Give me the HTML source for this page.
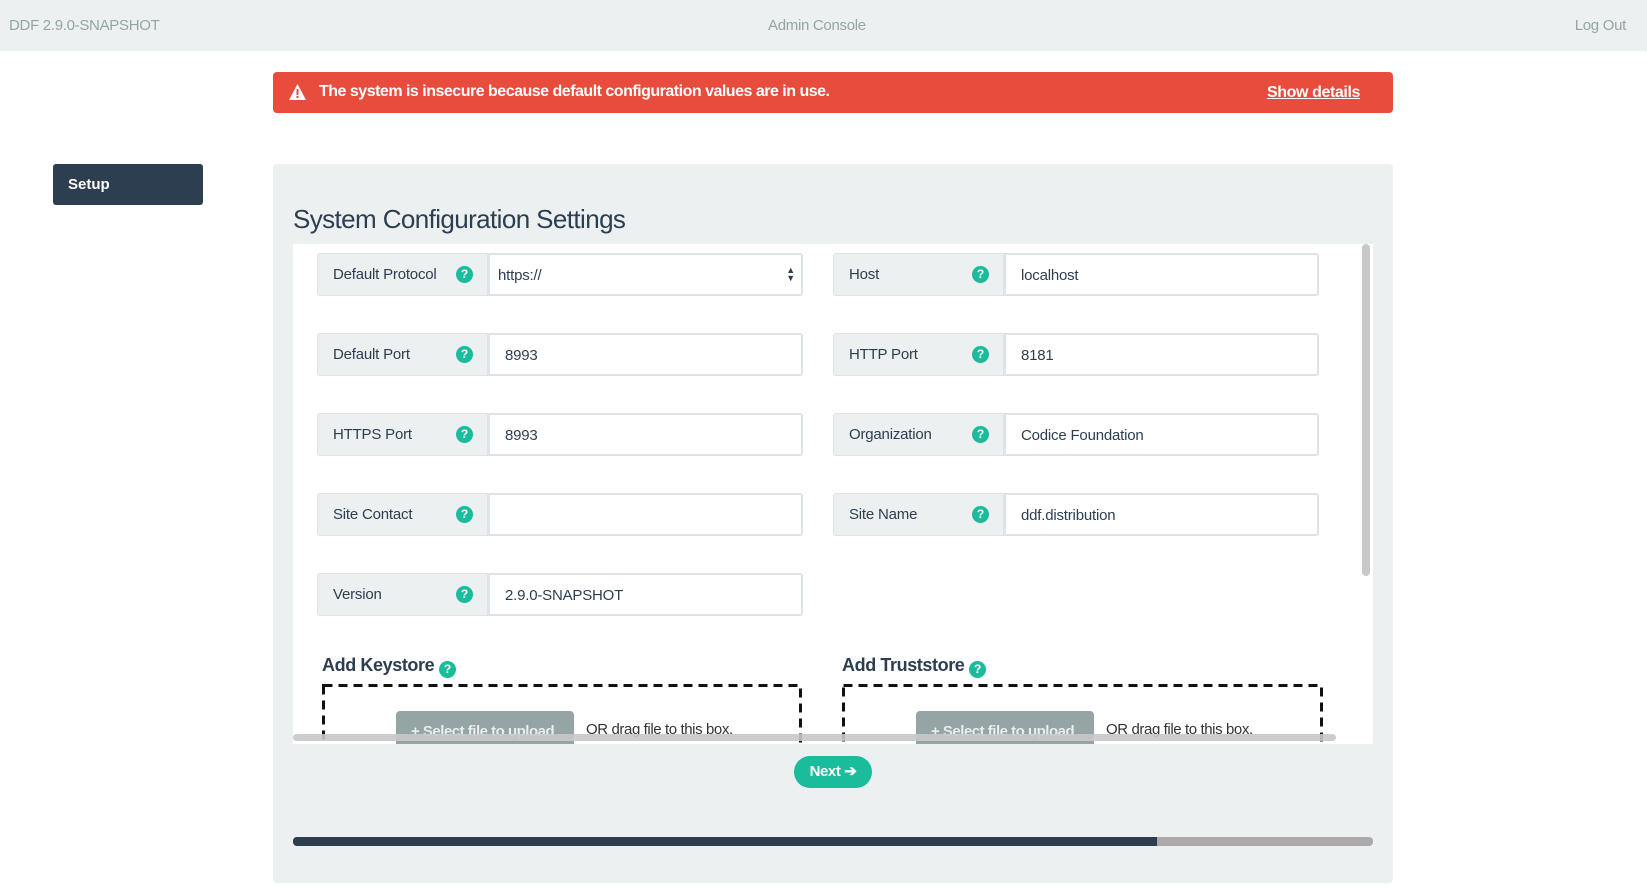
<!DOCTYPE html>
<html><head><meta charset="utf-8"><style>
*{box-sizing:border-box;margin:0;padding:0}
body{width:1647px;height:893px;background:#fff;font-family:"Liberation Sans",sans-serif;position:relative;overflow:hidden;color:#2c3e50}
.hdr{position:absolute;left:0;top:0;width:1647px;height:51px;background:#ecf0f1;color:#95a5a6;font-size:15px}
.hdr span{position:absolute;top:17px;letter-spacing:-0.3px}
.alert{position:absolute;left:273px;top:72px;width:1120px;height:41px;background:#e74c3c;border-radius:4px;color:#fff;font-size:16px;font-weight:bold}
.setup{position:absolute;left:53px;top:164px;width:150px;height:41px;background:#2c3e50;border-radius:3px;color:#fff;font-weight:bold;font-size:15px;padding:12px 0 0 15px}
.panel{position:absolute;left:273px;top:164px;width:1120px;height:719px;background:#ecf0f1;border-radius:4px}
.title{position:absolute;left:293px;top:204px;font-size:26px;color:#2c3e50;letter-spacing:-0.6px}
.inner{position:absolute;left:293px;top:244px;width:1080px;height:500px;background:#fff;overflow:hidden}
.row{position:absolute;height:43px;width:486px}
.lab{position:absolute;left:0;top:0;width:171px;height:43px;background:#ecf0f1;border:1px solid #dde3e8;border-radius:3px 0 0 3px;font-size:15px;padding:12px 0 0 15px;letter-spacing:-0.2px}
.q{position:absolute;left:138px;top:12px;width:17px;height:17px;border-radius:50%;background:#1abc9c;color:#fff;font-size:12px;font-weight:bold;text-align:center;line-height:17px;letter-spacing:0}
.inp{position:absolute;left:171px;top:0;width:315px;height:43px;border:2px solid #dde3e8;border-radius:0 3px 3px 0;font-size:15px;padding:12px 0 0 15px;letter-spacing:-0.2px}
.sec{position:absolute;font-size:18px;font-weight:bold;color:#2c3e50;letter-spacing:-0.4px}
.sq{display:inline-block;width:17px;height:17px;border-radius:50%;background:#1abc9c;color:#fff;font-size:12px;text-align:center;line-height:17px;vertical-align:-2px}
.drop{position:absolute;height:80px}
.btn{position:absolute;width:178px;height:40px;background:#95a5a6;border-radius:4px;color:#e8eded;font-size:15px;padding:12px 0 0 15px;font-weight:bold;letter-spacing:-0.5px}
.or{position:absolute;font-size:15px;color:#333;letter-spacing:-0.4px}
</style></head><body>
<div class="hdr"><span style="left:9px">DDF 2.9.0-SNAPSHOT</span><span style="left:768px">Admin Console</span><span style="right:21px">Log Out</span></div>
<div class="alert">
<svg style="position:absolute;left:16px;top:12px" width="17" height="16" viewBox="0 0 17 16"><path d="M8.5 0L17 16H0z" fill="#fff"/><rect x="7.5" y="5" width="2" height="6" fill="#e74c3c"/><rect x="7.5" y="12" width="2" height="2" fill="#e74c3c"/></svg>
<span style="position:absolute;left:46px;top:11px;letter-spacing:-0.5px">The system is insecure because default configuration values are in use.</span>
<span style="position:absolute;left:994px;top:12px;text-decoration:underline;letter-spacing:-0.4px">Show details</span></div>
<div class="setup">Setup</div>
<div class="panel"></div>
<div class="title">System Configuration Settings</div>
<div class="inner">
<div class="row" style="left:24px;top:9px"><div class="lab">Default Protocol<div class="q">?</div></div><div class="inp" style="padding-left:8px">https://<span style="position:absolute;right:6px;top:11px;font-size:9px;line-height:8px">▲<br>▼</span></div></div>
<div class="row" style="left:540px;top:9px"><div class="lab">Host<div class="q">?</div></div><div class="inp">localhost</div></div>
<div class="row" style="left:24px;top:89px"><div class="lab">Default Port<div class="q">?</div></div><div class="inp">8993</div></div>
<div class="row" style="left:540px;top:89px"><div class="lab">HTTP Port<div class="q">?</div></div><div class="inp">8181</div></div>
<div class="row" style="left:24px;top:169px"><div class="lab">HTTPS Port<div class="q">?</div></div><div class="inp">8993</div></div>
<div class="row" style="left:540px;top:169px"><div class="lab">Organization<div class="q">?</div></div><div class="inp">Codice Foundation</div></div>
<div class="row" style="left:24px;top:249px"><div class="lab">Site Contact<div class="q">?</div></div><div class="inp"></div></div>
<div class="row" style="left:540px;top:249px"><div class="lab">Site Name<div class="q">?</div></div><div class="inp">ddf.distribution</div></div>
<div class="row" style="left:24px;top:329px"><div class="lab">Version<div class="q">?</div></div><div class="inp">2.9.0-SNAPSHOT</div></div>
<div class="sec" style="left:29px;top:411px">Add Keystore <span class="sq">?</span></div>
<div class="sec" style="left:549px;top:411px">Add Truststore <span class="sq">?</span></div>
<svg class="drop" style="left:29px;top:440px" width="480" height="80"><rect x="1.5" y="1.5" width="477" height="90" fill="none" stroke="#111" stroke-width="3" stroke-dasharray="9 6"/></svg>
<svg class="drop" style="left:549px;top:440px" width="481" height="80"><rect x="1.5" y="1.5" width="478" height="90" fill="none" stroke="#111" stroke-width="3" stroke-dasharray="9 6"/></svg>
<div class="btn" style="left:103px;top:467px">+ Select file to upload</div>
<div class="or" style="left:293px;top:477px">OR drag file to this box.</div>
<div class="btn" style="left:623px;top:467px">+ Select file to upload</div>
<div class="or" style="left:813px;top:477px">OR drag file to this box.</div>
<div style="position:absolute;left:0;top:490px;width:1043px;height:7px;background:#c8c8c8;border-radius:4px;opacity:.9"></div>
<div style="position:absolute;left:1069px;top:0;width:8px;height:332px;background:#c8c8c8;border-radius:4px"></div>
</div>
<div style="position:absolute;left:794px;top:756px;width:78px;height:32px;background:#1abc9c;border-radius:16px;color:#fff;font-weight:bold;font-size:15px;text-align:center;line-height:32px;letter-spacing:-0.4px">Next ➔</div>
<div style="position:absolute;left:293px;top:837px;width:1080px;height:9px;background:#aaa;border-radius:4px;overflow:hidden"><div style="width:864px;height:9px;background:#2c3e50"></div></div>
</body></html>
